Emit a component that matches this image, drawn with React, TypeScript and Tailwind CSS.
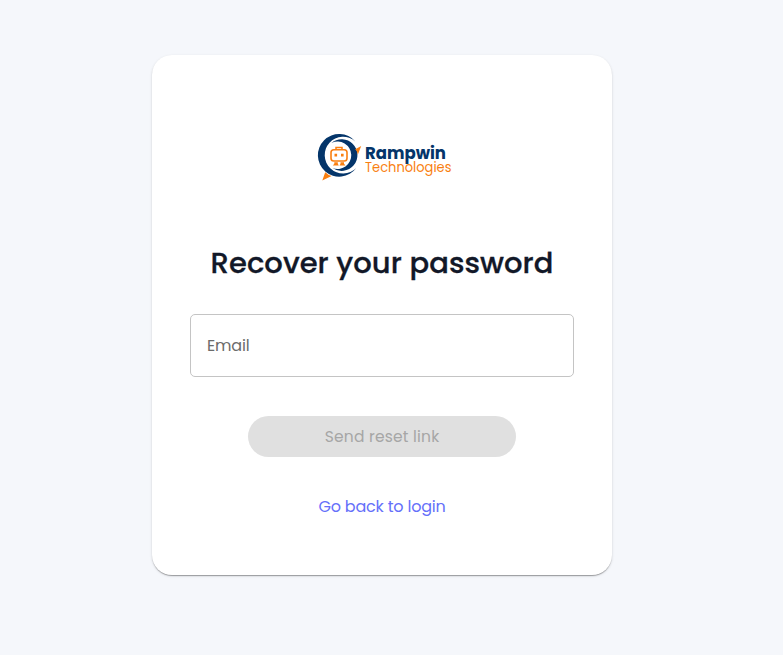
function Logo() {
  return (
    <svg width="138" height="50" viewBox="316 132 138 50" className="block overflow-visible" role="img" aria-label="Rampwin Technologies">
      <path d="M355.3 141.4A21.3 21.3 0 1 0 356.3 168A18.4 18.4 0 1 1 355.3 141.4Z" fill="#04356a" />
      <path d="M331.5 143A15.8 15.8 0 1 1 332.5 168A13.7 13.7 0 1 0 331.5 143Z" fill="#04356a" />
      <path d="M361.2 146L357.9 154.5Q357.6 151 355.2 149.2Z" fill="#f97f11" />
      <path d="M322.3 180.5L325.2 172.2Q328 175 331.6 175.9Z" fill="#f97f11" />
      <rect x="331" y="149.7" width="16" height="11.3" rx="2.8" fill="none" stroke="#f97f11" strokeWidth="1.6" />
      <path d="M336 149.5V147.6H342V149.5" fill="none" stroke="#f97f11" strokeWidth="1.5" />
      <path d="M334.5 153.8h2.6v2.6h-2.6zM341 153.8h2.6v2.6H341zM334.3 162.2h3.5v1.5l1 1.7h-6l1.5-1.7zM340.5 162.2h3.5v1.5l1.5 1.7h-6l1-1.7z" fill="#f97f11" />
      <text x="365" y="158.5" textLength="81" lengthAdjust="spacingAndGlyphs" fontSize="17" fontWeight="700" fill="#04356a" className="font-['Poppins','Inter',sans-serif]">Rampwin</text>
      <text x="365" y="171.7" textLength="86.5" lengthAdjust="spacingAndGlyphs" fontSize="14" fill="#f97f11" className="font-['Poppins','Inter',sans-serif]">Technologies</text>
    </svg>
  );
}

export default function App() {
  return (
    <div className="flex h-[655px] justify-center bg-[#f5f7fb] pr-[19px] pt-[55px] font-['Poppins','Inter',sans-serif]">
      <main className="flex h-[520px] w-[460px] flex-col items-center rounded-[20px] bg-white px-[38px] pt-[77px] shadow-[0px_2px_1px_-1px_rgba(0,0,0,0.2),0px_1px_1px_0px_rgba(0,0,0,0.14),0px_1px_3px_0px_rgba(0,0,0,0.12)]">
        <div className="w-full pl-[126px]"><Logo /></div>
        <h1 className="mt-[61px] h-10 whitespace-nowrap text-[29px] font-medium leading-10 tracking-[0.05px] text-[#121828] [-webkit-text-stroke:0.3px_#121828]">Recover your password</h1>
        <label className="mt-[31px] flex h-[63px] w-full items-center rounded-[5px] border border-[#c4c4c4] px-4 text-base tracking-[-0.2px] text-[#6b6b6b]">Email</label>
        <button type="button" disabled className="mt-[39px] h-[41px] w-[268px] rounded-full bg-[#e0e0e0] text-[15.5px] tracking-[0.2px] text-[#a6a6a6]">Send reset link</button>
        <a className="mt-[38px] text-base leading-6 tracking-[-0.2px] text-[#6570fa]">Go back to login</a>
      </main>
    </div>
  );
}
